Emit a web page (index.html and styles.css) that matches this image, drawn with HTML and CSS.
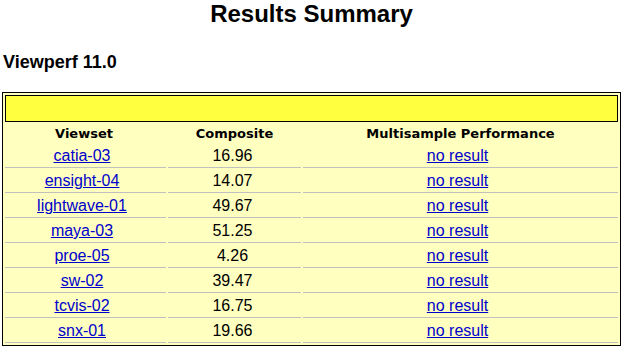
FILE: index.html
```html
<!DOCTYPE html>
<html>
<head>
<meta charset="utf-8">
<link rel="stylesheet" href="styles.css">
</head>
<body>
<h1 class="title">Results Summary</h1>
<h2 class="subtitle">Viewperf 11.0</h2>
<table class="results">
  <colgroup><col class="c1"><col class="c2"><col class="c3"></colgroup>
  <tr><td class="banner" colspan="3"></td></tr>
  <tr class="head"><th class="first">Viewset</th><th>Composite</th><th>Multisample Performance</th></tr>
  <tr><td class="first"><a href="#">catia-03</a></td><td class="num">16.96</td><td class="ms"><a href="#">no result</a></td></tr>
  <tr><td class="first"><a href="#">ensight-04</a></td><td class="num">14.07</td><td class="ms"><a href="#">no result</a></td></tr>
  <tr><td class="first"><a href="#">lightwave-01</a></td><td class="num">49.67</td><td class="ms"><a href="#">no result</a></td></tr>
  <tr><td class="first"><a href="#">maya-03</a></td><td class="num">51.25</td><td class="ms"><a href="#">no result</a></td></tr>
  <tr><td class="first"><a href="#">proe-05</a></td><td class="num">4.26</td><td class="ms"><a href="#">no result</a></td></tr>
  <tr><td class="first"><a href="#">sw-02</a></td><td class="num">39.47</td><td class="ms"><a href="#">no result</a></td></tr>
  <tr><td class="first"><a href="#">tcvis-02</a></td><td class="num">16.75</td><td class="ms"><a href="#">no result</a></td></tr>
  <tr><td class="first"><a href="#">snx-01</a></td><td class="num">19.66</td><td class="ms"><a href="#">no result</a></td></tr>
</table>
</body>
</html>
```
FILE: styles.css
```css
html, body {
  margin: 0;
  padding: 0;
  background: #ffffff;
}
body {
  padding: 0 4px 0 2px;
  font-family: "Liberation Sans", Arial, sans-serif;
  color: #000;
}
.title {
  margin: 0;
  font-size: 24px;
  font-weight: bold;
  text-align: center;
  line-height: 28px;
}
.subtitle {
  margin: 24px 0 20px 1px;
  font-size: 18px;
  font-weight: bold;
  line-height: 20px;
}
.results {
  width: 619px;
  border: 1px solid #000;
  border-spacing: 2px;
  background: #ffffc0;
  table-layout: fixed;
}
.c1 { width: 161px; }
.c2 { width: 133px; }
.c3 { width: 315px; }
.results td,
.results th {
  padding: 0;
  text-align: center;
}
.results td.first { padding-right: 7px; }
.results th.first { padding-right: 3px; }
.results td.num { padding-right: 4px; }
.results td.ms { padding-right: 6px; }
.banner {
  height: 25px;
  background: #ffff40;
  border: 1px solid #000;
}
.head th {
  height: 19px;
  font-family: "DejaVu Sans", sans-serif;
  font-size: 13px;
  font-weight: bold;
  line-height: 15px;
}
.results tr:not(.head) td:not(.banner) {
  height: 22px;
  font-size: 16px;
  line-height: 18px;
  border-bottom: 1px solid #c0c0c0;
}
.results a {
  color: #0000cc;
  text-decoration: underline;
}
```
